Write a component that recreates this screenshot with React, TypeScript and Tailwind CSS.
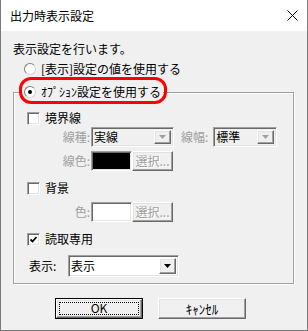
import React from "react";

const font = { fontFamily: '"Noto Sans CJK JP", "Noto Sans", sans-serif' };

const sunken =
  "border border-t-[#a0a0a0] border-l-[#a0a0a0] border-b-white border-r-white shadow-[inset_1px_1px_0_#696969,inset_-1px_-1px_0_#e3e3e3]";
const raised =
  "border border-t-white border-l-white border-b-[#696969] border-r-[#696969] shadow-[inset_-1px_-1px_0_#a0a0a0,inset_1px_1px_0_#e3e3e3]";

function Arrow({ color }: { color: string }) {
  return (
    <svg width="7" height="4" viewBox="0 0 7 4">
      <path d="M0 0 H7 L3.5 4 Z" fill={color} />
    </svg>
  );
}

function Combo({
  text,
  width,
  height,
  disabled,
}: {
  text: string;
  width: string;
  height: string;
  disabled?: boolean;
}) {
  return (
    <div
      className={`${sunken} ${width} ${height} flex items-stretch ${
        disabled ? "bg-[#f0f0f0]" : "bg-white"
      }`}
    >
      <div className="flex-1 flex items-center pl-[2px] text-[12px] leading-[14px] text-black">
        {text}
      </div>
      <div
        className={`${raised} w-[17px] m-[2px] bg-[#f0f0f0] flex items-center justify-center`}
      >
        <Arrow color={disabled ? "#a0a0a0" : "#000"} />
      </div>
    </div>
  );
}

function Check({ label, checked }: { label: string; checked?: boolean }) {
  return (
    <div className="flex items-center h-[14px] pl-[13px]">
      <div className={`${sunken} w-[13px] h-[13px] bg-white flex items-center justify-center`}>
        {checked && (
          <svg width="9" height="9" viewBox="0 0 9 9">
            <path d="M1.5 4.5 L3.5 6.5 L7.5 2" stroke="#000" strokeWidth="1.8" fill="none" />
          </svg>
        )}
      </div>
      <span className="ml-[5px] text-[12px] leading-[14px] text-black">{label}</span>
    </div>
  );
}

function DisabledBtn() {
  return (
    <div
      className={`${raised} w-[41px] h-[20px] bg-[#f0f0f0] flex items-center justify-center text-[12px] leading-[14px] text-[#a0a0a0]`}
      style={{ textShadow: "1px 1px 0 #fff" }}
    >
      選択...
    </div>
  );
}

function Radio({ checked }: { checked?: boolean }) {
  return (
    <div className="w-[12px] h-[12px] rounded-full border border-t-[#808080] border-l-[#808080] border-b-[#d4d4d4] border-r-[#d4d4d4] bg-white flex items-center justify-center">
      {checked && <div className="w-[4px] h-[4px] rounded-full bg-black" />}
    </div>
  );
}

export default function App() {
  return (
    <div
      className="relative w-[308px] h-[331px] bg-[#f0f0f0] border-x border-b border-[#7a7a7a] flex flex-col"
      style={font}
    >
      {/* Title bar */}
      <div className="h-[31px] bg-white flex items-center justify-between pl-[9px] pr-[9px] shrink-0">
        <span className="text-[12px] leading-[14px] text-black">出力時表示設定</span>
        <svg width="11" height="11" viewBox="0 0 11 11">
          <path d="M0.5 0.5 L10.5 10.5 M10.5 0.5 L0.5 10.5" stroke="#000" strokeWidth="1" />
        </svg>
      </div>

      {/* Body */}
      <div className="pt-[11px] pl-[12px] flex flex-col">
        <div className="text-[12px] leading-[14px] text-black">表示設定を行います。</div>
        <div className="mt-[6px] h-[14px] flex items-center pl-[11px]">
          <Radio />
          <span className="ml-[5px] text-[12px] leading-[14px] text-black">[表示]設定の値を使用する</span>
        </div>

        {/* Group box */}
        <div className="relative mt-[16px] w-[281px] border border-[#a0a0a0] shadow-[inset_1px_1px_0_#fff,1px_1px_0_#fff] pt-[18px] pb-[6px] flex flex-col">
          <div className="absolute left-[8px] -top-[8px] h-[14px] flex items-center bg-[#f0f0f0] px-[2px]">
            <Radio checked />
            <span className="ml-[5px] text-[12px] leading-[14px] text-black">ｵﾌﾟｼｮﾝ設定を使用する</span>
          </div>

          <Check label="境界線" />

          <div className="mt-[2px] flex items-center h-[20px]">
            <span className="w-[76px] text-right text-[12px] leading-[14px] text-[#a0a0a0]">線種:</span>
            <div className="ml-[1px]">
              <Combo text="実線" width="w-[83px]" height="h-[20px]" disabled />
            </div>
            <span className="ml-[7px] text-[12px] leading-[14px] text-[#a0a0a0]">線幅:</span>
            <div className="ml-[5px]">
              <Combo text="標準" width="w-[64px]" height="h-[20px]" disabled />
            </div>
          </div>

          <div className="mt-[4px] flex items-center h-[20px]">
            <span className="w-[76px] text-right text-[12px] leading-[14px] text-[#a0a0a0]">線色:</span>
            <div className={`${sunken} ml-[1px] w-[41px] h-[20px] bg-black`} />
            <DisabledBtn />
          </div>

          <div className="mt-[10px]">
            <Check label="背景" />
          </div>

          <div className="mt-[7px] flex items-center h-[20px]">
            <span className="w-[76px] text-right text-[12px] leading-[14px] text-[#a0a0a0]">色:</span>
            <div className={`${sunken} ml-[1px] w-[41px] h-[20px] bg-white`} />
            <DisabledBtn />
          </div>

          <div className="mt-[10px]">
            <Check label="読取専用" checked />
          </div>

          <div className="mt-[9px] flex items-center h-[22px] pl-[15px]">
            <span className="w-[39px] text-[12px] leading-[14px] text-black">表示:</span>
            <Combo text="表示" width="w-[111px]" height="h-[22px]" />
          </div>
        </div>

        {/* Buttons */}
        <div className="mt-[14px] flex pl-[42px] gap-[15px]">
          <div className="w-[88px] h-[21px] border border-black">
            <div className={`${raised} w-full h-full bg-[#f0f0f0] p-[2px] flex`}>
              <div className="flex-1 border border-dotted border-black flex items-center justify-center text-[12px] leading-[11px] text-black">
                <span className="-translate-y-[1px]">OK</span>
              </div>
            </div>
          </div>
          <div
            className={`${raised} w-[88px] h-[21px] bg-[#f0f0f0] flex items-center justify-center text-[13px] leading-[14px] text-black`}
          >
            ｷｬﾝｾﾙ
          </div>
        </div>
      </div>

      {/* Annotation */}
      <div className="absolute left-[18px] top-[77px] w-[148px] h-[27px] border-[3px] border-[#ff0000] rounded-[12px] pointer-events-none" />
    </div>
  );
}
